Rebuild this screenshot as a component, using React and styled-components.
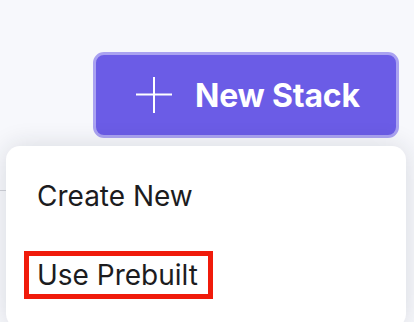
import React from "react";
import styled, { createGlobalStyle } from "styled-components";

const Global = createGlobalStyle`
  html, body { margin: 0; padding: 0; }
  body {
    background: #f7f8fc;
    font-family: Inter, "Noto Sans", "Liberation Sans", sans-serif;
    -webkit-font-smoothing: antialiased;
  }
`;

const Page = styled.div`
  position: relative;
  width: 414px;
  height: 322px;
  overflow: hidden;
  background: #f7f8fc;
`;

const Header = styled.header`
  box-sizing: border-box;
  height: 190px;
  display: flex;
  justify-content: flex-end;
  align-items: flex-start;
  padding: 52px 15px 0 0;
`;

const SectionRule = styled.div`
  width: 200px;
  height: 1px;
  background: #d0d2d9;
`;

const PrimaryButton = styled.button`
  box-sizing: border-box;
  width: 306px;
  height: 86px;
  display: flex;
  align-items: center;
  gap: 23px;
  padding: 0 0 0 40px;
  border: 3px solid #aaa2f1;
  border-radius: 11px;
  background: #6b5ce6;
  color: #ffffff;
  font-family: Inter, "Noto Sans", sans-serif;
  font-size: 32px;
  font-weight: 700;
  letter-spacing: -0.2px;
  cursor: pointer;
`;

const PlusIcon = () => (
  <svg width="36" height="36" viewBox="0 0 36 36" fill="none">
    <path d="M0 17.5H36M18 0V36" stroke="#ffffff" strokeWidth="2" />
  </svg>
);

const Menu = styled.div`
  position: absolute;
  left: 6px;
  top: 146px;
  width: 400px;
  height: 182px;
  box-sizing: border-box;
  padding-top: 10px;
  background: #ffffff;
  border-radius: 14px;
  box-shadow: 0 0 26px rgba(30, 32, 50, 0.14);
`;

const MenuItem = styled.div`
  height: 80px;
  display: flex;
  align-items: center;
  padding-left: 31px;
  font-size: 28px;
  font-weight: 400;
  color: #1c1c1e;
`;

const ItemLabel = styled.span`
  display: inline-block;
  line-height: 38px;
  ${(p) =>
    p.$highlighted &&
    `
    border: 5px solid #f01b0b;
    padding: 0 10px 0 8px;
    margin-left: -13px;
    margin-top: -2px;
  `}
`;

export default function App() {
  return (
    <>
      <Global />
      <Page>
        <Header>
          <PrimaryButton>
            <PlusIcon />
            New Stack
          </PrimaryButton>
        </Header>
        <SectionRule />
        <Menu>
          <MenuItem>
            <ItemLabel>Create New</ItemLabel>
          </MenuItem>
          <MenuItem>
            <ItemLabel $highlighted>Use Prebuilt</ItemLabel>
          </MenuItem>
        </Menu>
      </Page>
    </>
  );
}
